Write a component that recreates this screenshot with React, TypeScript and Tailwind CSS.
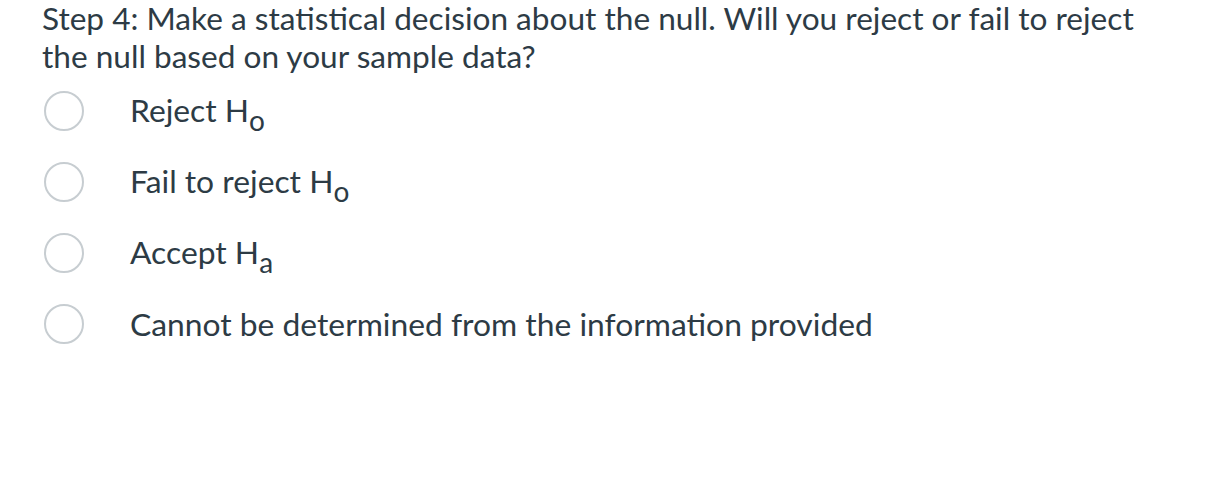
import React from "react";

const options: { label: string; sub?: string }[] = [
  { label: "Reject H", sub: "o" },
  { label: "Fail to reject H", sub: "o" },
  { label: "Accept H", sub: "a" },
  { label: "Cannot be determined from the information provided" },
];

export default function App() {
  return (
    <div
      className="w-[1208px] h-[480px] bg-white text-[#2d3b45] pl-[42px]"
      style={{ fontFamily: "Lato, 'Liberation Sans', sans-serif" }}
    >
      <div className="text-[31.6px] leading-[38px] -mt-[1px] w-[1120px]">
        Step 4: Make a statistical decision about the null. Will you reject or fail to reject the null based on your sample data?
      </div>
      <div className="flex flex-col">
        {options.map((o, i) => (
          <div key={i} className="flex items-center h-[71px]">
            <span className="w-[40px] h-[40px] rounded-full border-2 border-[#c7cdd1] bg-white shrink-0 ml-[2px]" />
            <span className="ml-[46px] text-[31.8px] leading-[38px]">
              {o.label}
              {o.sub && (
                <span className="text-[28px] relative top-[9px]">{o.sub}</span>
              )}
            </span>
          </div>
        ))}
      </div>
    </div>
  );
}
